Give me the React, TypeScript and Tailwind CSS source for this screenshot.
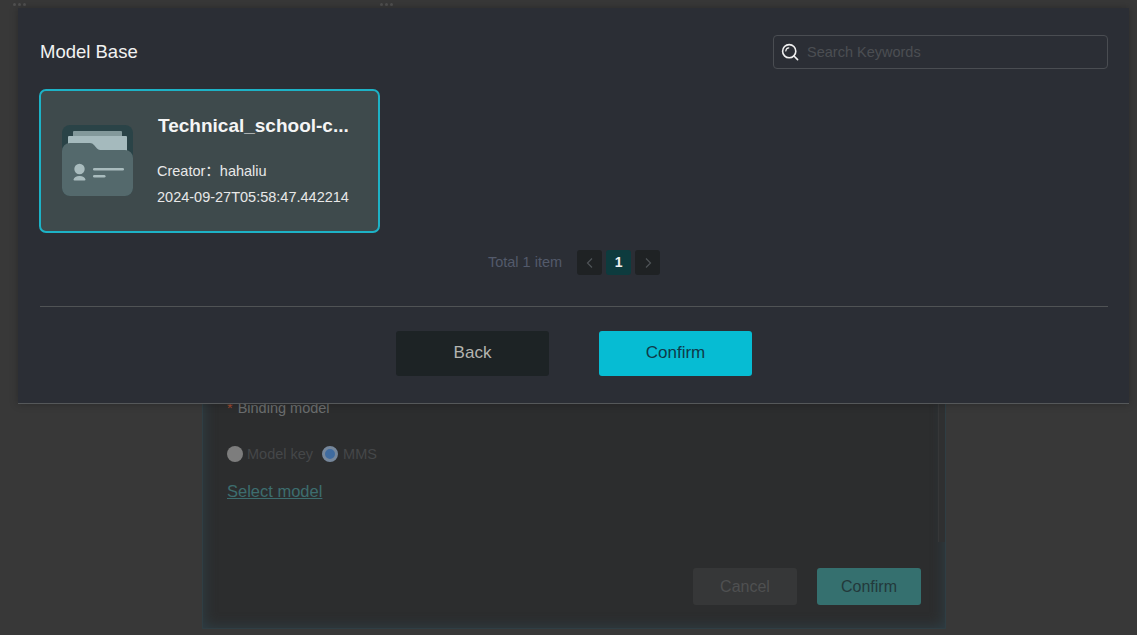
import React from "react";

const font = { fontFamily: '"Liberation Sans", Arial, "Noto Sans CJK SC", sans-serif' };

function FolderIcon() {
  return (
    <svg width="71" height="71" viewBox="0 0 71 71" className="shrink-0">
      <rect x="0" y="0" width="71" height="71" rx="8" fill="#2a4347" />
      <rect x="11" y="6" width="49" height="14" rx="1" fill="#83999b" />
      <rect x="6" y="11" width="59" height="22" rx="1" fill="#a5babd" />
      <path d="M8 18 H28 a5 5 0 0 1 4 2 l3 3.5 a4 4 0 0 0 3 1.5 H63 a8 8 0 0 1 8 8 V63 a8 8 0 0 1 -8 8 H8 a8 8 0 0 1 -8 -8 V26 a8 8 0 0 1 8 -8 Z" fill="#54696c" />
      <circle cx="17.5" cy="44" r="5.2" fill="#a9bcbe" />
      <path d="M11.5 54.5 a6 4.5 0 0 1 6 -3.5 a6 4.5 0 0 1 6 3.5 a1 1 0 0 1 -1 1 h-10 a1 1 0 0 1 -1 -1 Z" fill="#a9bcbe" />
      <rect x="31" y="43" width="31" height="2.6" rx="1.3" fill="#a9bcbe" />
      <rect x="31" y="50" width="12.5" height="2.6" rx="1.3" fill="#a9bcbe" />
    </svg>
  );
}

function SearchIcon() {
  return (
    <svg width="18" height="18" viewBox="0 0 18 18" fill="none" stroke="#f0f0f0" strokeWidth="1.6" strokeLinecap="round" className="shrink-0">
      <circle cx="8.2" cy="8.2" r="6.6" />
      <path d="M4.8 8 a3.4 3.4 0 0 1 3 -3.1" strokeWidth="1.2" />
      <path d="M13 13 L16.6 16.6" />
    </svg>
  );
}

function Chevron({ dir }: { dir: "l" | "r" }) {
  return (
    <svg width="10" height="12" viewBox="0 0 10 12" fill="none" stroke="#4f5357" strokeWidth="1.2">
      <path d={dir === "l" ? "M7 1.5 L2.5 6 L7 10.5" : "M3 1.5 L7.5 6 L3 10.5"} />
    </svg>
  );
}

function Dots() {
  return (
    <div className="flex gap-[2px]">
      <span className="w-[3px] h-[3px] rounded-full bg-[#505050]" />
      <span className="w-[3px] h-[3px] rounded-full bg-[#505050]" />
      <span className="w-[3px] h-[3px] rounded-full bg-[#505050]" />
    </div>
  );
}

export default function App() {
  return (
    <div className="relative w-[1137px] h-[635px] overflow-hidden bg-[#383838]" style={font}>
      {/* dimmed dialog behind */}
      <div className="flex pl-[202px] pt-[12px] h-[629px]">
        <div className="relative w-[744px] h-full flex flex-col justify-end border border-[#2f3e44] bg-[#2c2d2e] shadow-[inset_0_0_14px_#2f4048]">
          <div className="absolute right-0 top-0 bottom-[86px] w-[7px] bg-[#2f3031] border-l border-[#363738]" />
          <div className="flex flex-col pl-[24px] pr-[24px] pb-[23px]">
            <div className="flex items-center gap-[5px] text-[14.5px] leading-[18px] text-[#6b6d6e]">
              <span className="text-[#a04a30]">*</span>
              <span>Binding model</span>
            </div>
            <div className="flex items-center mt-[28px] text-[14.5px] leading-[18px] text-[#454749]">
              <span className="w-[16px] h-[16px] rounded-full bg-[#7d7d7d]" />
              <span className="ml-[4px]">Model key</span>
              <span className="ml-[9px] w-[16px] h-[16px] rounded-full bg-[#3f6b9f] border-[3px] border-[#76879b]" />
              <span className="ml-[5px]">MMS</span>
            </div>
            <a className="mt-[19px] text-[16.5px] leading-[18px] underline text-[#3d6d6e]">Select model</a>
            <div className="flex justify-end gap-[20px] mt-[68px]">
              <button className="w-[104px] h-[37px] rounded-[3px] bg-[#363738] text-[#4f5051] text-[16px]">Cancel</button>
              <button className="w-[104px] h-[37px] rounded-[3px] bg-[#35706f] text-[#23393b] text-[16px]">Confirm</button>
            </div>
          </div>
        </div>
      </div>

      <div className="absolute left-[13px] top-[3px]"><Dots /></div>
      <div className="absolute left-[380px] top-[3px]"><Dots /></div>

      {/* top modal */}
      <div className="absolute left-[18px] top-[8px] w-[1111px] h-[396px] bg-[#2b2e35] border-b border-[#55585a] shadow-[0_0_8px_rgba(0,0,0,0.25)] flex flex-col pl-[22px] pr-[21px]">
        <div className="flex items-center justify-between h-[81px] pt-[6px]">
          <h2 className="text-[18.5px] leading-[24px] text-[#f2f2f2]">Model Base</h2>
          <div className="flex items-center w-[335px] h-[34px] rounded-[4px] border border-[#4a4d52] pl-[7px] gap-[8px]">
            <SearchIcon />
            <span className="text-[14.5px] pt-[2px] text-[#4b4e53]">Search Keywords</span>
          </div>
        </div>

        <div className="flex items-center w-[341px] h-[144px] -ml-[1px] rounded-[7px] border-2 border-[#1db2c6] bg-[#3e4a4c] pl-[21px] pb-[2px]">
          <FolderIcon />
          <div className="flex flex-col ml-[24px] w-[194px] text-[#e8e8e8]">
            <div className="text-[19px] leading-[22px] font-bold text-[#f5f5f5] whitespace-nowrap ml-[1px] mb-[25px]">Technical_school-c...</div>
            <div className="text-[14.5px] leading-[18px] whitespace-pre">Creator：hahaliu</div>
            <div className="text-[14.5px] leading-[18px] mt-[8px] whitespace-nowrap">2024-09-27T05:58:47.442214</div>
          </div>
        </div>

        <div className="flex items-center justify-center h-[25px] mt-[17px]">
          <span className="text-[14.5px] text-[#535a6b] mr-[15px]">Total 1 item</span>
          <div className="flex items-center gap-[4px]">
            <span className="w-[25px] h-[25px] rounded-[3px] bg-[#1f2224] flex items-center justify-center"><Chevron dir="l" /></span>
            <span className="w-[25px] h-[25px] rounded-[3px] bg-[#0d3b3e] flex items-center justify-center text-[14px] font-bold text-[#f0f0f0]">1</span>
            <span className="w-[25px] h-[25px] rounded-[3px] bg-[#1f2224] flex items-center justify-center"><Chevron dir="r" /></span>
          </div>
        </div>

        <div className="h-px bg-[#505355] mt-[31px]" />

        <div className="flex items-center justify-center gap-[50px] mt-[24px]">
          <button className="w-[153px] h-[45px] rounded-[3px] bg-[#1d2325] pb-[1px] text-[17px] text-[#b4b4b0]">Back</button>
          <button className="w-[153px] h-[45px] rounded-[3px] bg-[#06bcd3] pb-[1px] text-[17px] text-[#0f3a4a]">Confirm</button>
        </div>
      </div>
    </div>
  );
}
